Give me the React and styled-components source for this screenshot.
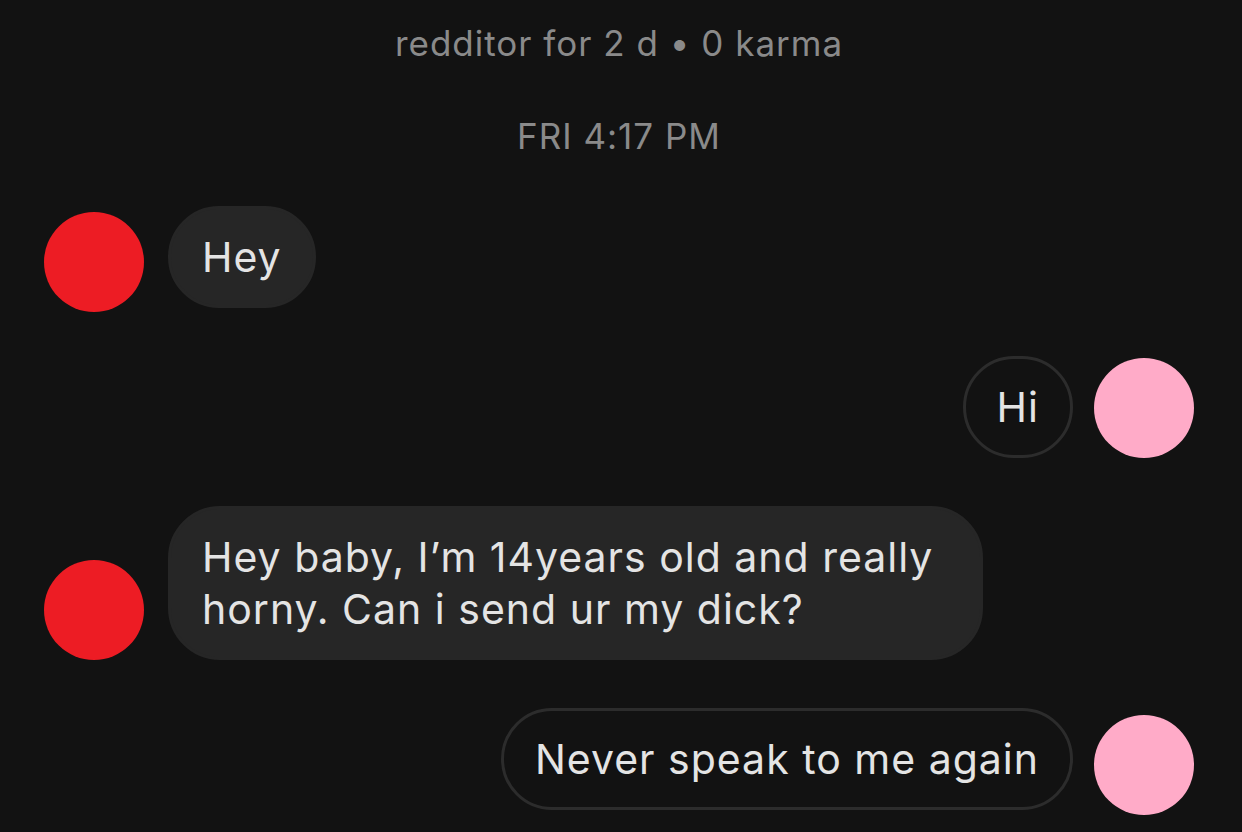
import React from 'react';
import styled, { createGlobalStyle } from 'styled-components';

const GlobalStyle = createGlobalStyle`
  html, body {
    margin: 0;
    padding: 0;
    background: #121212;
  }
  body {
    font-family: Inter, "Liberation Sans", sans-serif;
  }
`;

const Page = styled.div`
  min-height: 832px;
  background: #121212;
  padding: 23px 48px 0 44px;
  box-sizing: border-box;
  display: flex;
  flex-direction: column;
`;

const Meta = styled.div`
  text-align: center;
  color: #8a8a8a;
  font-size: 35px;
  line-height: 40px;
  letter-spacing: 1px;
  margin-bottom: ${p => p.$gap || 0}px;
`;

const Thread = styled.div`
  display: flex;
  flex-direction: column;
  gap: 48px;
  margin-top: 50px;
`;

const Row = styled.div`
  display: flex;
  align-items: flex-end;
  gap: ${p => (p.$mine ? 21 : 24)}px;
  justify-content: ${p => (p.$mine ? 'flex-end' : 'flex-start')};
`;

const Avatar = styled.div`
  width: 100px;
  height: 100px;
  flex: none;
  border-radius: 50%;
  background: ${p => (p.$mine ? '#ffabc8' : '#ed1c24')};
  margin-bottom: ${p => p.$drop || 0}px;
`;

const Bubble = styled.div`
  max-width: 815px;
  padding: 22px 31px;
  border-radius: 52px;
  font-size: 41px;
  line-height: 52px;
  letter-spacing: 1px;
  color: #e4e4e4;
  background: ${p => (p.$mine ? 'transparent' : '#262626')};
  border: 3px solid ${p => (p.$mine ? '#2c2c2c' : '#262626')};
  box-sizing: border-box;
`;

const messages = [
  { id: 1, mine: false, text: 'Hey', drop: -4 },
  { id: 2, mine: true, text: 'Hi', drop: 0 },
  { id: 3, mine: false, text: 'Hey baby, I\u2019m 14years old and really horny. Can i send ur my dick?', drop: 0 },
  { id: 4, mine: true, text: 'Never speak to me again', drop: -5 },
];

export default function App() {
  return (
    <>
      <GlobalStyle />
      <Page>
        <Meta $gap={53}>redditor for 2 d • 0 karma</Meta>
        <Meta>FRI 4:17 PM</Meta>
        <Thread>
          {messages.map(m =>
            m.mine ? (
              <Row key={m.id} $mine>
                <Bubble $mine>{m.text}</Bubble>
                <Avatar $mine $drop={m.drop} />
              </Row>
            ) : (
              <Row key={m.id}>
                <Avatar $drop={m.drop} />
                <Bubble>{m.text}</Bubble>
              </Row>
            )
          )}
        </Thread>
      </Page>
    </>
  );
}
